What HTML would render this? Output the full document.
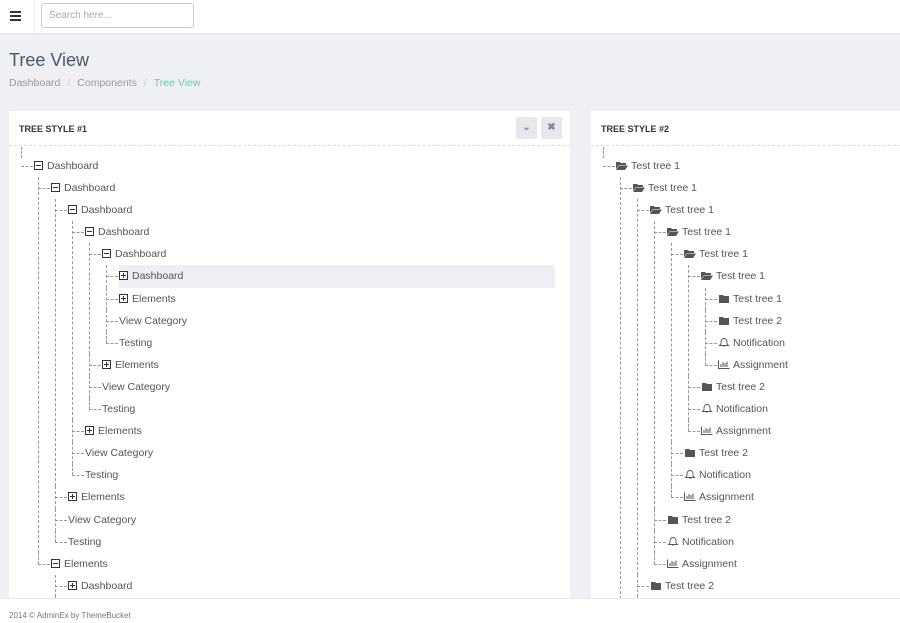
<!DOCTYPE html>
<html><head><meta charset="utf-8"><style>
*{box-sizing:border-box;margin:0;padding:0}
body{width:900px;height:623px;overflow:hidden;background:#eff0f4;font-family:"Liberation Sans",sans-serif;position:relative}
.top{position:absolute;left:0;top:0;width:900px;height:34px;background:#fff;border-bottom:1px solid #e4e5ea}
.burger{position:absolute;left:0;top:0;width:35px;height:33px;border-right:1px solid #eee}
.burger i{position:absolute;left:10px;width:11px;height:2px;background:#333}
.search{position:absolute;left:41px;top:3px;width:153px;height:25px;border:1px solid #ccc;border-radius:3px;font-size:10px;color:#aaa;padding:6px 7px}
h3{position:absolute;left:9px;top:50px;font-size:18px;font-weight:normal;color:#49586e}
.bc{position:absolute;left:9px;top:77px;font-size:10.5px;color:#999}
.bc span{color:#ccc;margin:0 7px}
.bc b{font-weight:normal;color:#65cea7}
.panel{position:absolute;top:111px;background:#fff;height:500px;overflow:hidden}
.ph{height:35px;border-bottom:1px dashed #ddd;font-size:9px;font-weight:bold;color:#333;padding:13px 10px;position:relative}
.btn{position:absolute;top:6px;width:21px;height:22px;background:#e6e7ec;border-radius:2px;color:#888;font-size:10px;text-align:center;line-height:22px}
.tree{position:absolute;top:44px;left:12px;right:15px;font-size:10.5px;color:#555}
ul{list-style:none;padding-left:4px}
.tree>ul{padding-left:0}
li{position:relative;padding-left:13px;line-height:22.1px}
li::before{content:'';position:absolute;left:0;top:11px;width:12px;border-top:1px dashed #999}
li::after{content:'';position:absolute;left:0;top:0;bottom:0;border-left:1px dashed #999}
li:last-child::after{bottom:auto;height:11px}
.tree>ul>li::after{top:-8px}
.r{display:block;white-space:nowrap}
.hl{background:#eeeff4}
.bx{display:inline-block;width:9px;height:9px;border:1px solid #333;vertical-align:-1px;margin-right:4px;position:relative;background:#fff}
.bx::before{content:'';position:absolute;left:1px;top:3px;width:5px;height:1px;background:#333}
.p::after{content:'';position:absolute;left:3px;top:1px;width:1px;height:5px;background:#333}
.ic{display:inline-block;width:12px;height:9px;vertical-align:-1px;margin-right:3px}
.foot{position:absolute;left:0;top:598px;width:900px;height:25px;background:#fff;border-top:1px solid #e8e8ec;font-size:8px;color:#777;padding:12px 9px}
</style></head><body>
<div class="top"><div class="burger"><i style="top:11px"></i><i style="top:15px"></i><i style="top:19px"></i></div><div class="search">Search here...</div></div>
<h3>Tree View</h3>
<div class="bc">Dashboard<span>/</span>Components<span>/</span><b>Tree View</b></div>

<div class="panel" style="left:9px;width:561px">
<div class="ph">TREE STYLE #1<div class="btn" style="left:507px">&#8964;</div><div class="btn" style="left:532px">&#10006;</div></div>
<div class="tree"><ul>
<li><span class="r"><i class="bx"></i>Dashboard</span><ul>
 <li><span class="r"><i class="bx"></i>Dashboard</span><ul>
  <li><span class="r"><i class="bx"></i>Dashboard</span><ul>
   <li><span class="r"><i class="bx"></i>Dashboard</span><ul>
    <li><span class="r"><i class="bx"></i>Dashboard</span><ul>
     <li><span class="r hl"><i class="bx p"></i>Dashboard</span></li>
     <li><span class="r"><i class="bx p"></i>Elements</span></li>
     <li><span class="r">View Category</span></li>
     <li><span class="r">Testing</span></li>
    </ul></li>
    <li><span class="r"><i class="bx p"></i>Elements</span></li>
    <li><span class="r">View Category</span></li>
    <li><span class="r">Testing</span></li>
   </ul></li>
   <li><span class="r"><i class="bx p"></i>Elements</span></li>
   <li><span class="r">View Category</span></li>
   <li><span class="r">Testing</span></li>
  </ul></li>
  <li><span class="r"><i class="bx p"></i>Elements</span></li>
  <li><span class="r">View Category</span></li>
  <li><span class="r">Testing</span></li>
 </ul></li>
 <li><span class="r"><i class="bx"></i>Elements</span><ul>
  <li><span class="r"><i class="bx p"></i>Dashboard</span></li>
  <li><span class="r"><i class="bx p"></i>Elements</span></li>
  <li><span class="r">View Category</span></li>
 </ul></li>
</ul></li></ul></div>
</div>

<svg width="0" height="0" style="position:absolute"><defs>
<symbol id="fo" viewBox="0 0 12 9"><path d="M0 1h4l1 1h5v2H3L0 8z M3 4.5h9L9 9H0z" fill="#555"/></symbol>
<symbol id="fc" viewBox="0 0 12 9"><path d="M1 1h4l1 1h5v7H1z" fill="#555"/></symbol>
<symbol id="bl" viewBox="0 0 12 9"><path d="M6 0.5c-2 0-3 1.5-3 3.5v2l-1.5 1.5h9L9 6V4c0-2-1-3.5-3-3.5zM5 8h2" fill="none" stroke="#555" stroke-width="0.9"/></symbol>
<symbol id="ch" viewBox="0 0 12 9"><path d="M0.5 0.5v8h11M3 7V4M5 7V2M7 7V3M9 7V1.5" fill="none" stroke="#555" stroke-width="1"/></symbol>
</defs></svg>

<div class="panel" style="left:591px;width:320px">
<div class="ph">TREE STYLE #2</div>
<div class="tree"><ul>
<li><span class="r"><svg class="ic"><use href="#fo"/></svg>Test tree 1</span><ul>
 <li><span class="r"><svg class="ic"><use href="#fo"/></svg>Test tree 1</span><ul>
  <li><span class="r"><svg class="ic"><use href="#fo"/></svg>Test tree 1</span><ul>
   <li><span class="r"><svg class="ic"><use href="#fo"/></svg>Test tree 1</span><ul>
    <li><span class="r"><svg class="ic"><use href="#fo"/></svg>Test tree 1</span><ul>
     <li><span class="r"><svg class="ic"><use href="#fo"/></svg>Test tree 1</span><ul>
      <li><span class="r"><svg class="ic"><use href="#fc"/></svg>Test tree 1</span></li>
      <li><span class="r"><svg class="ic"><use href="#fc"/></svg>Test tree 2</span></li>
      <li><span class="r"><svg class="ic"><use href="#bl"/></svg>Notification</span></li>
      <li><span class="r"><svg class="ic"><use href="#ch"/></svg>Assignment</span></li>
     </ul></li>
     <li><span class="r"><svg class="ic"><use href="#fc"/></svg>Test tree 2</span></li>
     <li><span class="r"><svg class="ic"><use href="#bl"/></svg>Notification</span></li>
     <li><span class="r"><svg class="ic"><use href="#ch"/></svg>Assignment</span></li>
    </ul></li>
    <li><span class="r"><svg class="ic"><use href="#fc"/></svg>Test tree 2</span></li>
    <li><span class="r"><svg class="ic"><use href="#bl"/></svg>Notification</span></li>
    <li><span class="r"><svg class="ic"><use href="#ch"/></svg>Assignment</span></li>
   </ul></li>
   <li><span class="r"><svg class="ic"><use href="#fc"/></svg>Test tree 2</span></li>
   <li><span class="r"><svg class="ic"><use href="#bl"/></svg>Notification</span></li>
   <li><span class="r"><svg class="ic"><use href="#ch"/></svg>Assignment</span></li>
  </ul></li>
  <li><span class="r"><svg class="ic"><use href="#fc"/></svg>Test tree 2</span></li>
  <li><span class="r"><svg class="ic"><use href="#bl"/></svg>Notification</span></li>
 </ul></li>
 <li><span class="r"><svg class="ic"><use href="#fc"/></svg>Test tree 2</span></li>
</ul></li></ul></div>
</div>

<div class="foot">2014 © AdminEx by ThemeBucket</div>
</body></html>
